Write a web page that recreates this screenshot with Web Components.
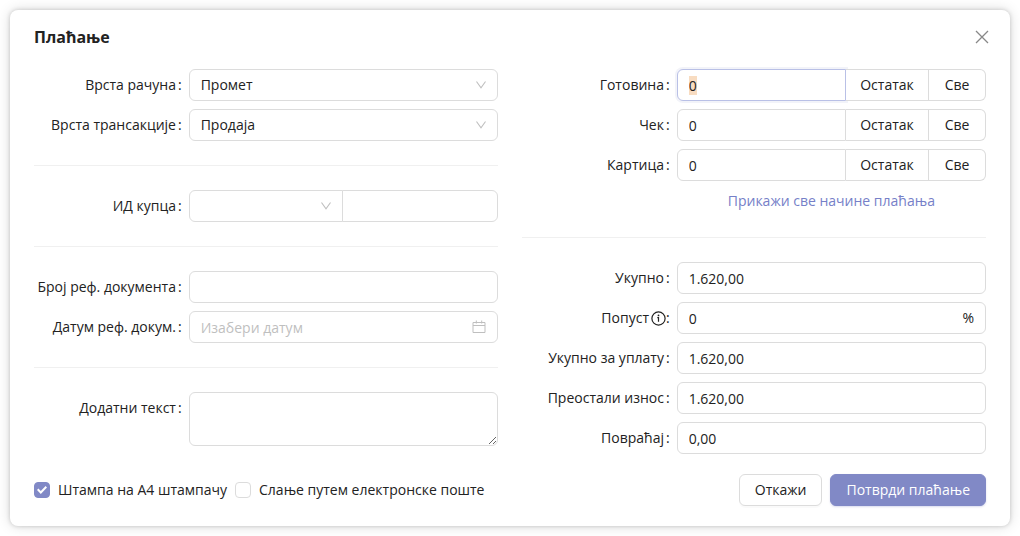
<!DOCTYPE html>
<html lang="sr-Cyrl">
<head>
<meta charset="utf-8">
<meta name="viewport" content="width=device-width, initial-scale=1">
<title>Плаћање</title>
<style>
  body {
    margin: 0;
    padding: 10px;
    background: #fff;
    color: #222;
    font: 14px/22px "Open Sans", "Noto Sans", sans-serif;
    --border: #dcdcdc;
    --line: #f0f0f0;
    --primary: #8189c6;
    --link: #7680c8;
    --radius: 6px;
  }
</style>
</head>
<body>
<pay-dialog heading="Плаћање">
  <form-column slot="left">
    <form-group>
      <select-field label="Врста рачуна" options="Промет,Предрачун,Копија,Обука,Аванс"></select-field>
      <select-field label="Врста трансакције" options="Продаја,Рефундација"></select-field>
    </form-group>
    <form-group>
      <buyer-field label="ИД купца"></buyer-field>
    </form-group>
    <form-group>
      <text-field label="Број реф. документа"></text-field>
      <date-field label="Датум реф. докум." placeholder="Изабери датум"></date-field>
    </form-group>
    <form-group>
      <note-field label="Додатни текст"></note-field>
    </form-group>
  </form-column>
  <form-column slot="right">
    <form-group>
      <amount-field label="Готовина" value="0" selected></amount-field>
      <amount-field label="Чек" value="0"></amount-field>
      <amount-field label="Картица" value="0"></amount-field>
      <more-link text="Прикажи све начине плаћања"></more-link>
    </form-group>
    <form-group>
      <text-field label="Укупно" value="1.620,00"></text-field>
      <text-field label="Попуст" value="0" suffix="%" info></text-field>
      <text-field label="Укупно за уплату" value="1.620,00"></text-field>
      <text-field label="Преостали износ" value="1.620,00"></text-field>
      <text-field label="Повраћај" value="0,00"></text-field>
    </form-group>
  </form-column>
  <check-option slot="options" label="Штампа на А4 штампачу" checked></check-option>
  <check-option slot="options" label="Слање путем електронске поште"></check-option>
  <action-button slot="actions" text="Откажи"></action-button>
  <action-button slot="actions" text="Потврди плаћање" primary></action-button>
</pay-dialog>

<script>
class PayDialog extends HTMLElement {
  constructor() {
    super();
    this.attachShadow({ mode: 'open' }).innerHTML = `
      <style>
        :host { display: block; }
        section {
          padding: 16px 24px 20px; border-radius: 8px; background: #fff;
          box-shadow: 0 0 4px rgba(0,0,0,.18), 0 0 14px rgba(0,0,0,.14);
        }
        header { display: flex; justify-content: space-between; align-items: center; margin-bottom: 21px; }
        h1 { margin: 0; font-size: 16px; line-height: 22px; font-weight: 700; }
        .close {
          display: flex; align-items: center; justify-content: center;
          width: 22px; height: 22px; margin-right: -7px; padding: 0; border: 0; background: none; color: #888;
        }
        main { display: grid; grid-template-columns: minmax(0, 1fr) minmax(0, 1fr); gap: 24px; }
        footer { display: flex; justify-content: space-between; align-items: center; margin-top: 20px; }
        .options, .actions { display: flex; gap: 8px; }
      </style>
      <section role="dialog" aria-labelledby="t">
        <header>
          <h1 id="t"></h1>
          <button class="close" type="button" aria-label="Затвори">
            <svg width="14" height="14" viewBox="0 0 14 14" fill="none" stroke="currentColor" stroke-width="1.3"><path d="M1 1l12 12M13 1L1 13"/></svg>
          </button>
        </header>
        <main><slot name="left"></slot><slot name="right"></slot></main>
        <footer>
          <div class="options"><slot name="options"></slot></div>
          <div class="actions"><slot name="actions"></slot></div>
        </footer>
      </section>`;
    this.shadowRoot.querySelector('h1').textContent = this.getAttribute('heading');
  }
}

/* A column stacks groups, with a thin rule between two groups. */
class FormColumn extends HTMLElement {
  constructor() {
    super();
    this.attachShadow({ mode: 'open' }).innerHTML = `
      <style>
        :host { display: block; }
        ::slotted(form-group:not(:first-child)) {
          margin-top: 24px; padding-top: 24px; border-top: 1px solid var(--line);
        }
      </style><slot></slot>`;
  }
}

class FormGroup extends HTMLElement {
  constructor() {
    super();
    this.attachShadow({ mode: 'open' }).innerHTML = `
      <style>:host { display: flex; flex-direction: column; gap: 8px; }</style><slot></slot>`;
  }
}

const ARROW = `<svg class="icon" width="12" height="12" viewBox="0 0 12 12" fill="none" stroke="#bfbfbf" stroke-width="1.1"><path d="M1.5 2.5L6 8.8L10.500 2.5"/></svg>`;
const INFO = `<svg class="info" width="15" height="15" viewBox="0 0 15 15" fill="none" stroke="#222" stroke-width="1.2"><circle cx="7.500" cy="7.500" r="6.600"/><path d="M6.300 6.700h1.200v4.100"/><circle cx="7.500" cy="4.400" r=".9" fill="#222" stroke="none"/></svg>`;

/* Base of all labelled rows: label in one third, control in two thirds. */
class FormField extends HTMLElement {
  constructor() {
    super();
    this.attachShadow({ mode: 'open' }).innerHTML = `
      <style>
        :host { display: grid; grid-template-columns: minmax(0, 1fr) minmax(0, 2fr); }
        label { display: flex; justify-content: flex-end; align-items: center; height: 32px; white-space: nowrap; }
        .colon { margin: 0 7px 0 2px; }
        .info { flex: none; margin-left: 2px; }
        .info + .colon { margin-left: 0; }
        .control { position: relative; display: flex; min-width: 0; }
        input, select, textarea, button {
          box-sizing: border-box; min-width: 0; margin: 0; height: 32px; padding: 4px 11px;
          border: 1px solid var(--border); border-radius: var(--radius);
          background: #fff; color: inherit; font: inherit; outline: none; appearance: none;
        }
        input, select, textarea { flex: 1; }
        select { width: 100%; }
        input::placeholder { color: #bfbfbf; }
        .icon { position: absolute; right: 11px; top: 10px; pointer-events: none; }
        ${this.css()}
      </style>
      <label for="c"><span></span>${this.hasAttribute('info') ? INFO : ''}<span class="colon">:</span></label>
      <div class="control">${this.control()}</div>`;
    this.shadowRoot.querySelector('label span').textContent = this.getAttribute('label');
  }
  css() { return ''; }
  control() { return ''; }
  get value() { return this.getAttribute('value') || ''; }
}

class TextField extends FormField {
  css() { return `.suffix { position: absolute; right: 12px; top: 5px; }`; }
  control() {
    const s = this.getAttribute('suffix');
    return `<input id="c" type="text" value="${this.value}">${s ? `<span class="suffix">${s}</span>` : ''}`;
  }
}

class SelectField extends FormField {
  control() {
    const options = this.getAttribute('options').split(',').map(o => `<option>${o}</option>`).join('');
    return `<select id="c">${options}</select>${ARROW}`;
  }
}

class BuyerField extends FormField {
  css() {
    return `
      .control { display: grid; grid-template-columns: minmax(0, 1fr) minmax(0, 1fr); }
      .pick { position: relative; display: flex; }
      select { border-radius: 6px 0 0 6px; }
      input { margin-left: -1px; border-radius: 0 6px 6px 0; }`;
  }
  control() {
    return `<div class="pick"><select id="c"><option></option></select>${ARROW}</div>
      <input type="text" aria-label="Број ИД купца">`;
  }
}

class DateField extends FormField {
  control() {
    return `<input id="c" type="text" placeholder="${this.getAttribute('placeholder')}">
      <svg class="icon" width="14" height="14" viewBox="0 0 14 14" fill="none" stroke="#bfbfbf" stroke-width="1"><path d="M1 2.500h12v10H1zM1 5.500h12M4.300 .5v3M9.700 .5v3"/></svg>`;
  }
  css() { return `.icon { top: 9px; right: 12px; }`; }
}

class NoteField extends FormField {
  css() { return `textarea { height: 54px; resize: vertical; }`; }
  control() { return `<textarea id="c"></textarea>`; }
}

class AmountField extends FormField {
  css() {
    return `
      .control { display: grid; grid-template-columns: minmax(0, 1fr) 83px 57px; }
      input { border-radius: 6px 0 0 6px; }
      button { position: relative; padding: 4px 0; border-left-width: 0; border-radius: 0; text-align: center; }
      .all { border-radius: 0 6px 6px 0; }
      input:focus { border-color: #b9c0e6; box-shadow: 0 0 0 2px rgba(129,137,198,.1); }
      input::selection { background: rgba(248,220,192,.99); color: #222; }`;
  }
  control() {
    return `<input id="c" type="text" value="${this.value}">
      <button class="rest" type="button">Остатак</button><button class="all" type="button">Све</button>`;
  }
  connectedCallback() {
    if (!this.hasAttribute('selected')) return;
    const input = this.shadowRoot.querySelector('input');
    input.focus();
    input.select();
  }
}

class MoreLink extends HTMLElement {
  constructor() {
    super();
    this.attachShadow({ mode: 'open' }).innerHTML = `
      <style>
        :host { display: grid; grid-template-columns: minmax(0, 1fr) minmax(0, 2fr); line-height: 24px; }
        a { grid-column: 2; justify-self: center; color: var(--link); text-decoration: none; white-space: nowrap; }
      </style><a href="#"></a>`;
    this.shadowRoot.querySelector('a').textContent = this.getAttribute('text');
  }
}

class CheckOption extends HTMLElement {
  constructor() {
    super();
    this.attachShadow({ mode: 'open' }).innerHTML = `
      <style>
        :host { display: block; }
        label { display: flex; align-items: center; gap: 8px; white-space: nowrap; }
        input {
          box-sizing: border-box; display: grid; place-items: center; width: 16px; height: 16px; margin: 0;
          border: 1px solid var(--border); border-radius: 4px; appearance: none;
        }
        input:checked { border-color: var(--primary); background: var(--primary); }
        input:checked::after {
          content: ""; width: 10px; height: 8px; background: #fff;
          clip-path: polygon(0 50%, 14% 32%, 38% 62%, 86% 0, 100% 18%, 38% 100%);
        }
      </style>
      <label><input type="checkbox"${this.hasAttribute('checked') ? ' checked' : ''}><span></span></label>`;
    this.shadowRoot.querySelector('span').textContent = this.getAttribute('label');
  }
}

class ActionButton extends HTMLElement {
  constructor() {
    super();
    this.attachShadow({ mode: 'open' }).innerHTML = `
      <style>
        :host { display: block; }
        button {
          box-sizing: border-box; height: 32px; padding: 4px 15px; border: 1px solid var(--border);
          border-radius: var(--radius); background: #fff; color: inherit; font: inherit;
          box-shadow: 0 2px 0 rgba(0,0,0,.02);
        }
        :host([primary]) button {
          border-color: var(--primary); background: var(--primary); color: #fff;
          box-shadow: 0 1px 2px rgba(129,137,198,.3);
        }
      </style><button type="button"></button>`;
    this.shadowRoot.querySelector('button').textContent = this.getAttribute('text');
  }
}

customElements.define('pay-dialog', PayDialog);
customElements.define('form-column', FormColumn);
customElements.define('form-group', FormGroup);
customElements.define('text-field', TextField);
customElements.define('select-field', SelectField);
customElements.define('buyer-field', BuyerField);
customElements.define('date-field', DateField);
customElements.define('note-field', NoteField);
customElements.define('amount-field', AmountField);
customElements.define('more-link', MoreLink);
customElements.define('check-option', CheckOption);
customElements.define('action-button', ActionButton);
</script>
</body>
</html>
